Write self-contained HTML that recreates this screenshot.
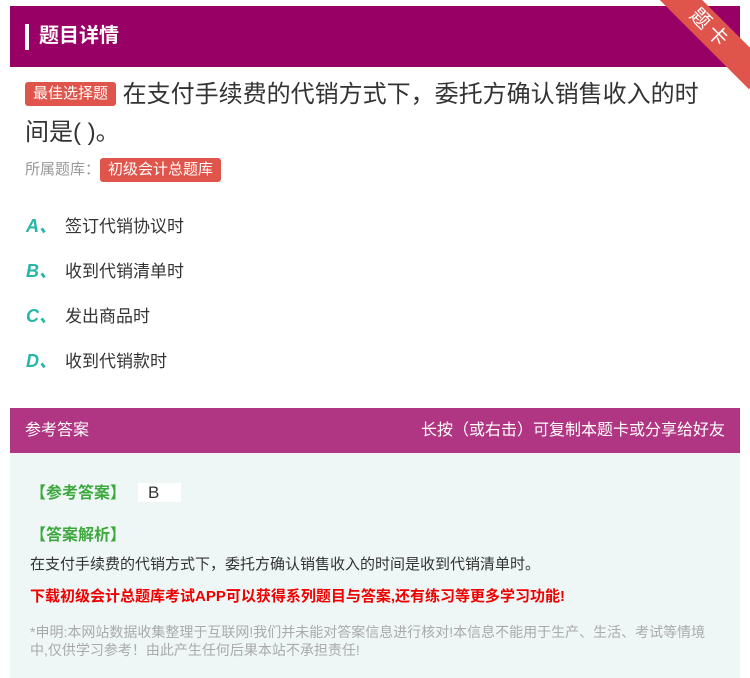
<!DOCTYPE html><html><head><meta charset="utf-8"><style>
body{margin:0;width:750px;height:678px;background:#fff;font-family:"Liberation Sans","Noto Sans CJK SC",sans-serif;position:relative;overflow:hidden}
.hd{position:absolute;left:10px;top:6px;width:730px;height:61px;background:#990066}
.hd .bar{position:absolute;left:15px;top:18px;width:4px;height:26px;background:#fff}
.hd .t{position:absolute;left:29px;top:16px;color:#fff;font-size:20px;font-weight:bold;line-height:28px}
.rib{position:absolute;right:-30px;top:14px;width:140px;height:30px;background:#e0554b;transform:rotate(45deg);color:#fff;font-size:20px;text-align:center;line-height:30px;letter-spacing:4px}
.q{position:absolute;left:25px;top:76px;width:690px;font-size:24px;line-height:38px;color:#333}
.tag{display:inline-block;background:#e0554b;color:#fff;font-size:15px;line-height:24px;padding:0 8px;border-radius:3px;vertical-align:4px}
.src{position:absolute;left:25px;top:158px;font-size:15px;color:#999;line-height:24px}
.opt{position:absolute;left:26px;font-size:17px;color:#333;line-height:24px}
.opt b{color:#27b6a6;font-style:italic;font-size:18px;margin-right:8px}
.ah{position:absolute;left:10px;top:408px;width:730px;height:45px;background:#b03582;color:#fff;font-size:16px;line-height:45px}
.ab{position:absolute;left:10px;top:453px;width:730px;height:225px;background:#eef7f6}
.g{color:#3ea83e;font-weight:bold;font-size:16px}
</style></head><body>
<div class="hd"><div class="bar"></div><div class="t">题目详情</div></div>
<div class="rib">题卡</div>
<div class="q"><span class="tag">最佳选择题</span> 在支付手续费的代销方式下，委托方确认销售收入的时<br>间是( )。</div>
<div class="src">所属题库：<span class="tag" style="vertical-align:0">初级会计总题库</span></div>
<div class="opt" style="top:214px"><b>A、</b>签订代销协议时</div>
<div class="opt" style="top:259px"><b>B、</b>收到代销清单时</div>
<div class="opt" style="top:304px"><b>C、</b>发出商品时</div>
<div class="opt" style="top:349px"><b>D、</b>收到代销款时</div>
<div class="ah"><span style="position:absolute;left:15px">参考答案</span><span style="position:absolute;right:15px">长按（或右击）可复制本题卡或分享给好友</span></div>
<div class="ab">
<div class="g" style="position:absolute;left:20px;top:26px">【参考答案】<span style="color:#333;font-weight:normal;margin-left:12px;background:#fff;padding:0 22px 0 10px;font-size:17px">B</span></div>
<div class="g" style="position:absolute;left:20px;top:68px">【答案解析】</div>
<div style="position:absolute;left:20px;top:100px;font-size:15px;color:#333">在支付手续费的代销方式下，委托方确认销售收入的时间是收到代销清单时。</div>
<div style="position:absolute;left:20px;top:132px;font-size:15px;color:#e00;font-weight:bold">下载初级会计总题库考试APP可以获得系列题目与答案,还有练习等更多学习功能!</div>
<div style="position:absolute;left:20px;top:170px;width:690px;font-size:14px;color:#aaa;line-height:18px">*申明:本网站数据收集整理于互联网!我们并未能对答案信息进行核对!本信息不能用于生产、生活、考试等情境<br>中,仅供学习参考！由此产生任何后果本站不承担责任!</div>
</div>
</body></html>
